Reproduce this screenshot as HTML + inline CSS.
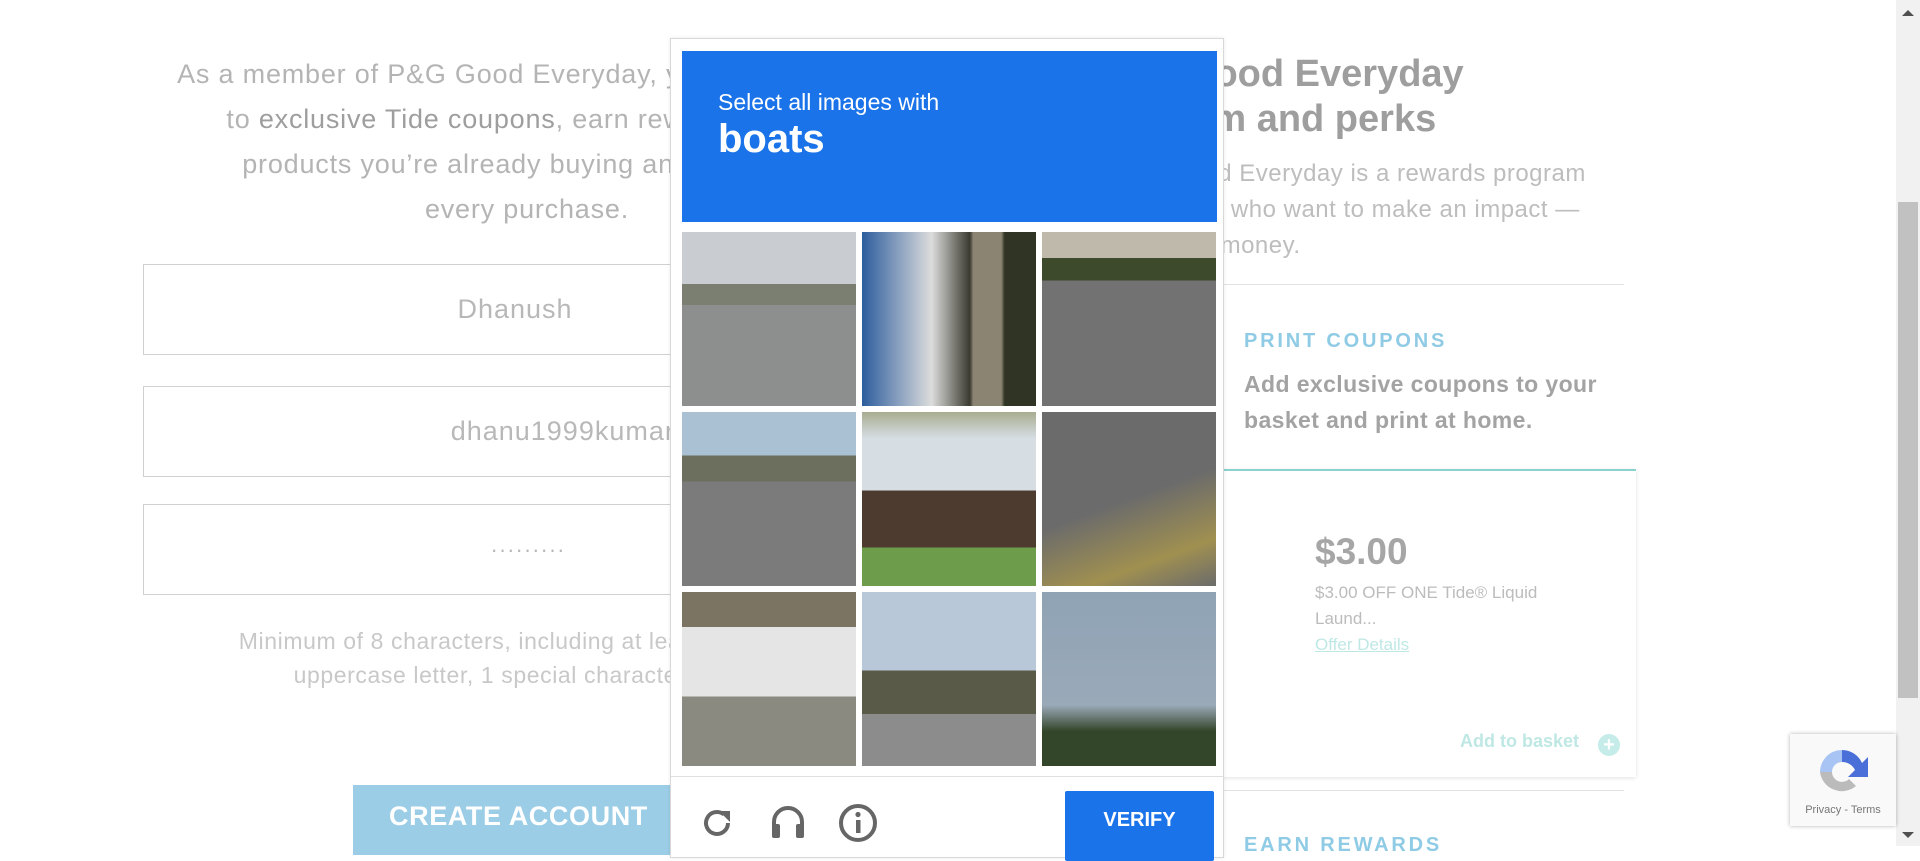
<!DOCTYPE html>
<html><head><meta charset="utf-8"><style>
*{box-sizing:border-box;margin:0;padding:0}
body{width:1920px;height:846px;overflow:hidden;background:#fff;font-family:"Liberation Sans",sans-serif;position:relative;color:#a9a9a9}
.abs{position:absolute}
.lt{left:123px;width:808px;text-align:center;font-size:27px;font-weight:300;color:#b4b4b4;line-height:45px;top:52px;letter-spacing:0.8px}
.lt b{color:#9e9e9e}
.inp{left:143px;width:770px;height:91px;border:1px solid #d0d0d0;text-align:center;font-size:27px;color:#b8b8b8;line-height:89px;letter-spacing:1px}
.hint{left:123px;width:808px;text-align:center;font-size:23px;color:#c8c8c8;line-height:34px;top:624px;letter-spacing:0.6px}
.btn{left:353px;top:785px;width:400px;height:70px;background:#9ccde6;color:#fff;font-weight:bold;font-size:27px;line-height:62px;padding-left:36px;letter-spacing:0.6px}
.h{left:1092px;font-size:38px;font-weight:bold;color:#9e9e9e;line-height:45px;top:52px}
.p{left:1112px;font-size:24px;color:#bdbdbd;line-height:36px;top:156px;letter-spacing:0.5px}
.tile{position:absolute;width:174px;height:174px}
</style></head><body>
<div class="abs lt">As a member of P&amp;G Good Everyday, you'll get access<br>to <b>exclusive Tide coupons</b>, earn rewards on the<br>products you’re already buying and help with<br>every purchase.</div>
<div class="abs inp" style="top:264px;padding-right:26px">Dhanush</div>
<div class="abs inp" style="top:386px;padding-left:230px">dhanu1999kumar@gmail.com</div>
<div class="abs inp" style="top:504px;font-size:22px">·········</div>
<div class="abs hint">Minimum of 8 characters, including at least 1 number,<br>uppercase letter, 1 special character and ...</div>
<div class="abs btn">CREATE ACCOUNT</div>

<div class="abs h">P&amp;G Good Everyday<br>program and perks</div>
<div class="abs p">P&amp;G Good Everyday is a rewards program<br>for people who want to make an impact —<br>and save money.</div>
<div class="abs" style="left:1150px;top:284px;width:474px;height:1px;background:#e2e2e2"></div>
<div class="abs" style="left:1244px;top:330px;font-size:20px;font-weight:bold;letter-spacing:2.8px;color:#8fcbe5">PRINT COUPONS</div>
<div class="abs" style="left:1244px;top:366px;font-size:23px;font-weight:bold;color:#a3a3a3;line-height:36px;letter-spacing:0.4px">Add exclusive coupons to your<br>basket and print at home.</div>
<div class="abs" style="left:1150px;top:469px;width:486px;height:308px;border-top:2px solid #8ad3cd;box-shadow:0 1px 4px rgba(0,0,0,.12)"></div>
<div class="abs" style="left:1315px;top:531px;font-size:37px;font-weight:bold;color:#a6a6a6">$3.00</div>
<div class="abs" style="left:1315px;top:580px;font-size:17px;color:#bcbcbc;line-height:26px">$3.00 OFF ONE Tide® Liquid<br>Laund...<br><span style="color:#bfe8e4;text-decoration:underline">Offer Details</span></div>
<div class="abs" style="left:1460px;top:731px;font-size:18px;font-weight:bold;color:#bfe8e4">Add to basket</div>
<div class="abs" style="left:1598px;top:734px;width:22px;height:22px;border-radius:50%;background:#c5ece8;color:#fff;font-size:20px;line-height:22px;text-align:center;font-weight:bold">+</div>
<div class="abs" style="left:1150px;top:790px;width:474px;height:1px;background:#e2e2e2"></div>
<div class="abs" style="left:1244px;top:834px;font-size:20px;font-weight:bold;letter-spacing:2.8px;color:#8fcbe5">EARN REWARDS</div>

<div class="abs" style="left:1896px;top:0;width:24px;height:846px;background:#f1f1f1"></div>
<div class="abs" style="left:1898px;top:202px;width:20px;height:496px;background:#c1c1c1"></div>
<div class="abs" style="left:1902px;top:10px;width:0;height:0;border:6px solid transparent;border-bottom-color:#505050;border-top:0"></div>
<div class="abs" style="left:1902px;top:832px;width:0;height:0;border:6px solid transparent;border-top-color:#505050;border-bottom:0"></div>

<div class="abs" style="left:1790px;top:734px;width:106px;height:92px;background:#f9f9f9;box-shadow:0 0 4px rgba(0,0,0,.3)">
<svg class="abs" style="left:24px;top:10px" width="56" height="56" viewBox="0 0 56 56"><path d="M28 6a22 22 0 0 1 20 13l6-6v20H34l7-7a14 14 0 0 0-13-8z" fill="#4a6fd8"/><path d="M6 28A22 22 0 0 1 28 6v12a10 10 0 0 0-10 10z" fill="#a8c4f4"/><path d="M6 28h12a10 10 0 0 0 17 7l7 7A22 22 0 0 1 6 28z" fill="#bbb"/></svg>
<div class="abs" style="left:0;top:70px;width:106px;text-align:center;font-size:11px;color:#777">Privacy - Terms</div></div>

<div class="abs" style="left:670px;top:38px;width:554px;height:820px;background:#fff;border:1px solid #d8d8d8;box-shadow:0 0 4px rgba(0,0,0,.08)">
<div class="abs" style="left:11px;top:12px;width:535px;height:171px;background:#1a73e8;color:#fff">
<div class="abs" style="left:36px;top:38px;font-size:23px">Select all images with</div>
<div class="abs" style="left:36px;top:66px;font-size:40px;font-weight:bold">boats</div></div>
<div class="tile" style="left:11px;top:193px;background:linear-gradient(#c9ccd0 0 30%,#7b7f72 30% 42%,#8d8e8e 42%)"></div>
<div class="tile" style="left:191px;top:193px;background:linear-gradient(90deg,#2d5d9e 0,#dcdcdc 40%,#3a3a30 62%,#8b8472 64% 80%,#2f3425 82%)"></div>
<div class="tile" style="left:371px;top:193px;background:linear-gradient(#bfb9ac 0 15%,#3d4a2c 15% 28%,#727272 28%)"></div>
<div class="tile" style="left:11px;top:373px;background:linear-gradient(#a9c1d3 0 25%,#6d6f5e 25% 40%,#7b7b7b 40%)"></div>
<div class="tile" style="left:191px;top:373px;background:linear-gradient(#a8ad90 0,#d6dde3 15% 45%,#4c3b2e 45% 78%,#6d9d4a 78%)"></div>
<div class="tile" style="left:371px;top:373px;background:linear-gradient(160deg,#6b6b6b 0 50%,#6b6b6b 50%,#a09050 80%,#6b6b6b)"></div>
<div class="tile" style="left:11px;top:553px;background:linear-gradient(#7c7462 0 20%,#e5e5e5 20% 60%,#8a8a80 60%)"></div>
<div class="tile" style="left:191px;top:553px;background:linear-gradient(#b8c8d8 0 45%,#5a5a48 45% 70%,#8c8c8c 70%)"></div>
<div class="tile" style="left:371px;top:553px;background:linear-gradient(#8fa3b5 0,#9aa9b8 65%,#34462a 80%)"></div>
<div class="abs" style="left:0;top:737px;width:552px;height:1px;background:#dfdfdf"></div>
<svg class="abs" style="left:26px;top:764px" width="40" height="40" viewBox="0 0 40 40"><path d="M31 20a11 11 0 1 1-4-8.5" fill="none" stroke="#666" stroke-width="4"/><path d="M22 8h11v11z" fill="#666"/></svg>
<svg class="abs" style="left:96px;top:762px" width="42" height="42" viewBox="0 0 42 42"><path d="M7 32V21a14 14 0 0 1 28 0v11" fill="none" stroke="#666" stroke-width="4"/><rect x="5" y="23" width="8" height="14" rx="2" fill="#666"/><rect x="29" y="23" width="8" height="14" rx="2" fill="#666"/></svg>
<svg class="abs" style="left:166px;top:763px" width="42" height="42" viewBox="0 0 42 42"><circle cx="21" cy="21" r="17" fill="none" stroke="#666" stroke-width="4"/><rect x="19" y="18" width="4.5" height="13" fill="#666"/><circle cx="21" cy="12.5" r="2.6" fill="#666"/></svg>
<div class="abs" style="left:394px;top:752px;width:149px;height:70px;background:#1a73e8;border-radius:2px;color:#fff;font-size:20px;font-weight:bold;text-align:center;line-height:58px">VERIFY</div>
</div>
</body></html>
